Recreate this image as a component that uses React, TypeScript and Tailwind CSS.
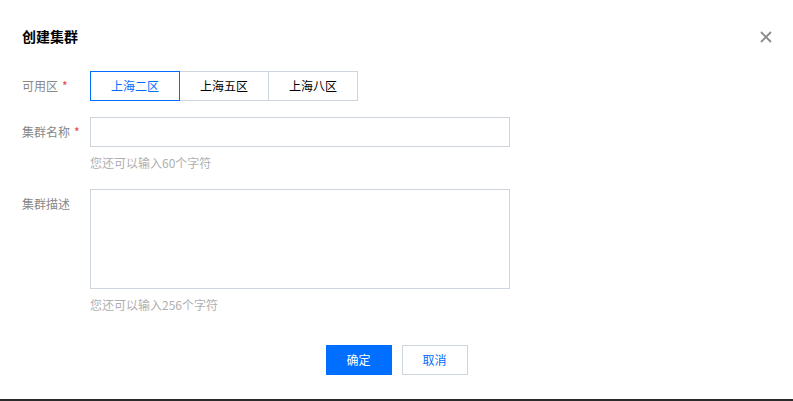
import React from "react";

export default function App() {
  const font = { fontFamily: '"Noto Sans CJK SC", "Noto Sans", sans-serif' };
  return (
    <div
      className="relative w-[793px] h-[401px] bg-white border-b-2 border-[#2b2b2b] box-border overflow-hidden"
      style={font}
    >
      <div className="px-[22px] pt-[26px]">
        <div className="text-[14px] leading-[20px] font-bold text-[#000]">创建集群</div>

        <div className="mt-[25px] flex">
          <div className="w-[68px] text-[12px] leading-[30px] text-[#888]">
            可用区<span className="ml-[4px] text-[#e54545]">*</span>
          </div>
          <div className="flex">
            <button className="relative z-10 w-[90px] h-[30px] border border-[#006eff] text-[12px] text-[#006eff] bg-white">
              上海二区
            </button>
            <button className="-ml-px w-[90px] h-[30px] border border-[#cfd5de] text-[12px] text-[#000] bg-white">
              上海五区
            </button>
            <button className="-ml-px w-[90px] h-[30px] border border-[#cfd5de] text-[12px] text-[#000] bg-white">
              上海八区
            </button>
          </div>
        </div>

        <div className="mt-[16px] flex">
          <div className="w-[68px] text-[12px] leading-[30px] text-[#888]">
            集群名称<span className="ml-[4px] text-[#e54545]">*</span>
          </div>
          <div>
            <input className="block w-[420px] h-[30px] border border-[#cfd5de] outline-none px-2 text-[12px]" />
            <div className="mt-[8px] text-[12px] leading-[16px] text-[#b0b0b0]">您还可以输入60个字符</div>
          </div>
        </div>

        <div className="mt-[18px] flex">
          <div className="w-[68px] text-[12px] leading-[30px] text-[#888]">集群描述</div>
          <div>
            <textarea className="block w-[420px] h-[100px] border border-[#cfd5de] outline-none p-2 text-[12px] resize-none" />
            <div className="mt-[8px] text-[12px] leading-[16px] text-[#b0b0b0]">您还可以输入256个字符</div>
          </div>
        </div>

        <div className="mt-[32px] flex justify-center gap-[10px] -mx-[22px]">
          <button className="w-[66px] h-[30px] bg-[#006eff] text-white text-[12px]">确定</button>
          <button className="w-[66px] h-[30px] border border-[#cfd5de] bg-white text-[#006eff] text-[12px]">取消</button>
        </div>
      </div>

      <button className="absolute left-[759px] top-[30px] w-[14px] h-[14px] flex items-center justify-center">
        <svg width="14" height="14" viewBox="0 0 14 14">
          <path d="M2 2 L12 12 M12 2 L2 12" stroke="#888" strokeWidth="1.8" fill="none" />
        </svg>
      </button>
    </div>
  );
}
